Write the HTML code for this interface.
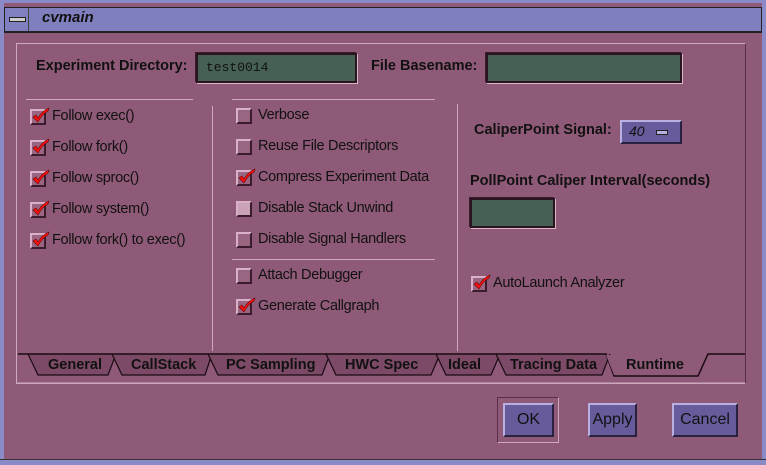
<!DOCTYPE html>
<html><head><style>
*{margin:0;padding:0;box-sizing:border-box}
body{width:766px;height:465px;overflow:hidden;background:#8f5a77;font-family:"Liberation Sans",sans-serif;position:relative;color:#111}
.a{position:absolute}
.t{font-size:14.5px;white-space:nowrap;letter-spacing:-0.3px}
.b{font-weight:bold;font-size:14.5px;white-space:nowrap}
.cb{position:absolute;width:16px;height:16px;background:#9a6580;border-top:2px solid #d8b0c8;border-left:2px solid #d8b0c8;border-right:2px solid #3a1c2c;border-bottom:2px solid #3a1c2c}
.cb.l{background:#caa3b9}
.tf{position:absolute;background:#476055;border:2px solid #2a1420;box-shadow:1px 1px 0 #d8b8c8,-1px -1px 0 #3a1c2c}
.hl{position:absolute;height:1px;background:#d0a8bd}
.vl{position:absolute;width:1px;background:#d0a8bd}
.btn{position:absolute;background:#675b9c;border-top:2px solid #b8b0e0;border-left:2px solid #b8b0e0;border-right:2px solid #2a2040;border-bottom:2px solid #2a2040;font-size:16px;text-align:center;line-height:30px;color:#111}
</style></head><body>
<div class="a" style="left:0;top:0;width:766px;height:465px;border:4px solid #8a8ac8;border-top:3px solid #8a8ac8"></div>
<div class="a" style="left:4px;top:7px;width:758px;height:25px;background:#7f7fbe;border:1px solid #222"></div>
<div class="a" style="left:5px;top:8px;width:24px;height:23px;border-right:1px solid #444;background:#8080c0"></div>
<div class="a" style="left:9px;top:17px;width:17px;height:5px;background:#ccc;border:1px solid #222"></div>
<div class="a" style="left:42px;top:9px;font-size:15px;font-style:italic;font-weight:bold;color:#111">cvmain</div>
<div class="a" style="left:4px;top:32px;width:758px;height:1px;background:#222"></div>
<div class="a" style="left:0;top:459px;width:766px;height:6px;background:#8a8ac8;border-top:1px solid #333"></div>

<div class="a" style="left:16px;top:43px;width:730px;height:341px;border:1px solid #d0a8bd;border-right-color:#5a3048;border-bottom-color:#d0a8bd"></div>

<div class="a b" style="left:36px;top:58px">Experiment Directory:</div>
<div class="tf" style="left:196px;top:53px;width:161px;height:30px"></div>
<div class="a" style="left:206px;top:60px;font-family:'Liberation Mono',monospace;font-size:13px;color:#111">test0014</div>
<div class="a b" style="left:371px;top:58px">File Basename:</div>
<div class="tf" style="left:486px;top:53px;width:196px;height:30px"></div>

<div class="hl" style="left:26px;top:99px;width:167px"></div>
<div class="hl" style="left:232px;top:99px;width:203px"></div>
<div class="vl" style="left:212px;top:106px;height:245px"></div>
<div class="vl" style="left:457px;top:104px;height:247px"></div>
<div class="hl" style="left:232px;top:259px;width:203px"></div>

<div class="cb" style="left:30px;top:109px"></div><div class="a t" style="left:52px;top:108px">Follow exec()</div>
<div class="cb" style="left:30px;top:140px"></div><div class="a t" style="left:52px;top:139px">Follow fork()</div>
<div class="cb" style="left:30px;top:171px"></div><div class="a t" style="left:52px;top:170px">Follow sproc()</div>
<div class="cb" style="left:30px;top:202px"></div><div class="a t" style="left:52px;top:201px">Follow system()</div>
<div class="cb" style="left:30px;top:233px"></div><div class="a t" style="left:52px;top:232px">Follow fork() to exec()</div>

<div class="cb" style="left:236px;top:108px"></div><div class="a t" style="left:258px;top:107px">Verbose</div>
<div class="cb" style="left:236px;top:139px"></div><div class="a t" style="left:258px;top:138px">Reuse File Descriptors</div>
<div class="cb" style="left:236px;top:170px"></div><div class="a t" style="left:258px;top:169px">Compress Experiment Data</div>
<div class="cb l" style="left:236px;top:201px"></div><div class="a t" style="left:258px;top:200px">Disable Stack Unwind</div>
<div class="cb" style="left:236px;top:232px"></div><div class="a t" style="left:258px;top:231px">Disable Signal Handlers</div>
<div class="cb" style="left:236px;top:268px"></div><div class="a t" style="left:258px;top:267px">Attach Debugger</div>
<div class="cb" style="left:236px;top:299px"></div><div class="a t" style="left:258px;top:298px">Generate Callgraph</div>

<div class="a b" style="left:474px;top:122px">CaliperPoint Signal:</div>
<div class="a" style="left:620px;top:120px;width:62px;height:24px;background:#675b9c;border-top:2px solid #b8b0e0;border-left:2px solid #b8b0e0;border-right:2px solid #2a2040;border-bottom:2px solid #2a2040"></div>
<div class="a" style="left:629px;top:123px;font-size:14px;font-style:italic">40</div>
<div class="a" style="left:656px;top:130px;width:12px;height:5px;background:#b8b0e0;border:1px solid #222"></div>
<div class="a b" style="left:470px;top:173px">PollPoint Caliper Interval(seconds)</div>
<div class="tf" style="left:470px;top:198px;width:85px;height:30px"></div>
<div class="cb" style="left:471px;top:276px"></div><div class="a t" style="left:493px;top:275px">AutoLaunch Analyzer</div>

<svg class="a" style="left:0;top:0" width="766" height="465">
<defs><path id="ck" d="M2 9 L5 7 L7 10 Q11 3 18 0 L17 3 Q11 6 7 14 Z" fill="#ff1010" stroke="#600" stroke-width="0.6"/></defs>
<use href="#ck" x="31" y="108"/><use href="#ck" x="31" y="139"/><use href="#ck" x="31" y="170"/><use href="#ck" x="31" y="201"/><use href="#ck" x="31" y="232"/>
<use href="#ck" x="237" y="169"/><use href="#ck" x="237" y="298"/><use href="#ck" x="472" y="275"/>
<g stroke="#1a0a12" stroke-width="1.2" fill="#7c4a66">
<path d="M28 354 L38 375 L108 375 L116 354"/>
<path d="M112 354 L122 375 L205 375 L212 354"/>
<path d="M208 354 L218 375 L322 375 L330 354"/>
<path d="M326 354 L336 375 L431 375 L440 354"/>
<path d="M436 354 L446 375 L491 375 L500 354"/>
<path d="M496 354 L506 375 L602 375 L610 354"/>
</g>
<path d="M18 354 L606 354 L614 376 L698 376 L708 354 L745 354" fill="none" stroke="#1a0a12" stroke-width="1.5"/>
<path d="M606 355 L614 375 L697 375 L706 355 Z" fill="#8f5a77"/>
<path d="M16 383 L745 383" stroke="#d0a8bd"/>
</svg>
<div class="a b" style="left:48px;top:357px">General</div>
<div class="a b" style="left:131px;top:357px">CallStack</div>
<div class="a b" style="left:226px;top:357px">PC Sampling</div>
<div class="a b" style="left:345px;top:357px">HWC Spec</div>
<div class="a b" style="left:448px;top:357px">Ideal</div>
<div class="a b" style="left:510px;top:357px">Tracing Data</div>
<div class="a b" style="left:626px;top:357px">Runtime</div>

<div class="a" style="left:497px;top:397px;width:62px;height:46px;border:1px solid #d0a8bd;border-top-color:#5a3048;border-left-color:#5a3048"></div>
<div class="btn" style="left:503px;top:403px;width:51px;height:34px">OK</div>
<div class="btn" style="left:588px;top:403px;width:49px;height:34px">Apply</div>
<div class="btn" style="left:672px;top:403px;width:66px;height:34px">Cancel</div>
</body></html>
